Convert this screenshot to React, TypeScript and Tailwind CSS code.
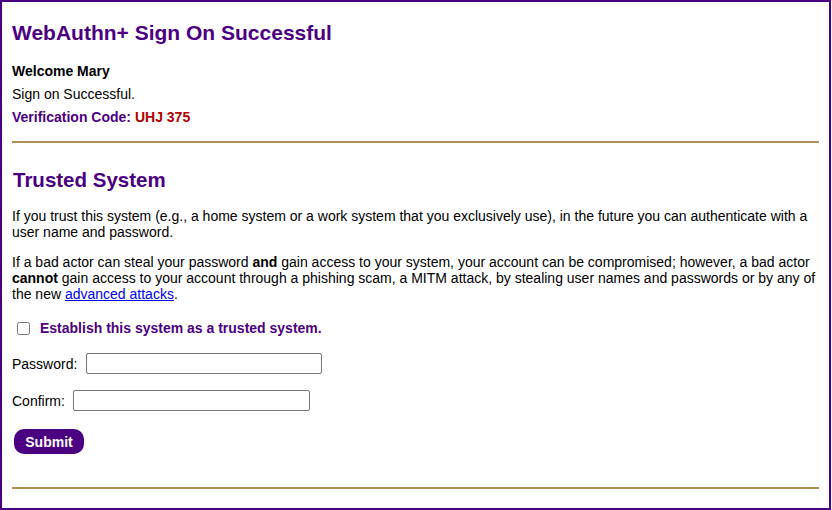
import { useState } from "react";

export default function App() {
  const [trusted, setTrusted] = useState(false);
  const [password, setPassword] = useState("");
  const [confirm, setConfirm] = useState("");

  return (
    <div className="w-[831px] h-[510px] border-2 border-[#4b0082] bg-white px-[10px] font-['Liberation_Sans',Arial,sans-serif] text-[14px] leading-[16px] text-black">
      <h1 className="mt-[19px] text-[21px] leading-[24px] font-bold text-[#4b0082]">
        WebAuthn+ Sign On Successful
      </h1>
      <p className="mt-[18px] font-bold">Welcome Mary</p>
      <p className="mt-[7px]">Sign on Successful.</p>
      <p className="mt-[7px] font-bold text-[#4b0082]">
        Verification Code: <span className="text-[#b00000]">UHJ 375</span>
      </p>

      <div className="mt-[16px] h-[2px] bg-[#ad9150]" />

      <h2 className="mt-[25px] ml-[1px] text-[20.5px] leading-[24px] font-bold text-[#4b0082]">
        Trusted System
      </h2>
      <p className="mt-[16px]">
        If you trust this system (e.g., a home system or a work system that you exclusively use), in the
        future you can authenticate with a user name and password.
      </p>
      <p className="mt-[14px]">
        If a bad actor can steal your password <b>and</b> gain access to your system, your account can be
        compromised; however, a bad actor <b>cannot</b> gain access to your account through a phishing scam,
        a MITM attack, by stealing user names and passwords or by any of the new{" "}
        <a href="#" className="text-[#0000ee] underline">
          advanced attacks
        </a>
        .
      </p>

      <label className="mt-[18px] flex items-center">
        <input
          type="checkbox"
          checked={trusted}
          onChange={(e) => setTrusted(e.target.checked)}
          className="m-0 ml-[5px] h-[13px] w-[13px]"
        />
        <span className="ml-[10px] font-bold text-[#4b0082]">
          Establish this system as a trusted system.
        </span>
      </label>

      <div className="mt-[17px] flex h-[21px] items-center">
        <span>Password:</span>
        <input
          type="password"
          value={password}
          onChange={(e) => setPassword(e.target.value)}
          className="ml-[9px] h-[21px] w-[236px] rounded-[2px] border border-[#767676] px-[2px] outline-none"
        />
      </div>

      <div className="mt-[16px] flex h-[21px] items-center">
        <span>Confirm:</span>
        <input
          type="password"
          value={confirm}
          onChange={(e) => setConfirm(e.target.value)}
          className="ml-[8px] h-[21px] w-[237px] rounded-[2px] border border-[#767676] px-[2px] outline-none"
        />
      </div>

      <button className="mt-[18px] ml-[2px] block h-[25px] w-[70px] rounded-[10px] bg-[#4b0082] font-bold text-white">
        Submit
      </button>

      <div className="mt-[33px] h-[2px] bg-[#ad9150]" />
    </div>
  );
}
